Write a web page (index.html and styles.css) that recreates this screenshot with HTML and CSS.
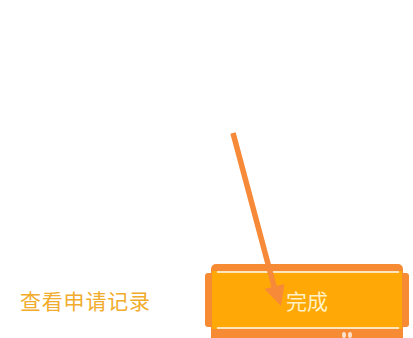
FILE: index.html
```html
<!DOCTYPE html>
<html lang="zh">
<head>
<meta charset="utf-8">
<link rel="stylesheet" href="styles.css">
</head>
<body>
<div class="page">
  <div class="spacer"></div>
  <div class="actions">
    <a class="link">查看申请记录</a>
    <div class="btn-wrap">
      <span class="bulge bulge-left"></span>
      <div class="frame">
        <div class="btn">完成</div>
        <span class="dots"><i></i><i></i></span>
      </div>
      <span class="bulge bulge-right"></span>
    </div>
  </div>
  <svg class="arrow" width="413" height="338" viewBox="0 0 413 338">
    <line x1="233" y1="133" x2="275" y2="290" stroke="#F78A38" stroke-width="5.5"/>
    <polygon points="281,306 264.5,289 284.5,284" fill="#F78A38"/>
  </svg>
</div>
</body>
</html>
```
FILE: styles.css
```css
html, body {
  margin: 0;
  padding: 0;
  background: #ffffff;
}
body {
  width: 413px;
  height: 338px;
  overflow: hidden;
  font-family: "Noto Sans CJK SC", "Noto Sans", sans-serif;
}
.page {
  position: relative;
  width: 413px;
  height: 338px;
  display: flex;
  flex-direction: column;
}
.spacer {
  height: 264px;
  flex: none;
}
.actions {
  display: flex;
  align-items: flex-start;
}
.link {
  margin-left: 20px;
  margin-top: 24px;
  font-size: 21px;
  line-height: 24px;
  color: #F1AC2C;
  letter-spacing: 0.8px;
}
.btn-wrap {
  margin-left: auto;
  margin-right: 4px;
  display: flex;
  align-items: flex-start;
}
.bulge {
  width: 6px;
  height: 54px;
  margin-top: 9px;
  background: #F78B34;
}
.bulge-left {
  border-radius: 3px 0 0 3px;
}
.bulge-right {
  border-radius: 0 3px 3px 0;
}
.frame {
  position: relative;
  width: 192px;
  height: 80px;
  box-sizing: border-box;
  padding: 7px 1px 0;
  background: #F78B34;
  border-radius: 5px 5px 0 0;
}
.btn {
  height: 58px;
  display: flex;
  align-items: center;
  justify-content: center;
  font-size: 21px;
  color: #FFF1C4;
  background:
    linear-gradient(#FCE6BE, #FCE6BE) left 5px top 0 / calc(100% - 8px) 2px no-repeat,
    linear-gradient(#FCE6BE, #FCE6BE) left 5px bottom 0 / calc(100% - 8px) 2px no-repeat,
    #FFA806;
}
.dots {
  position: absolute;
  left: 131px;
  top: 68px;
  display: flex;
  gap: 2px;
}
.dots i {
  display: block;
  width: 4px;
  height: 6px;
  border-radius: 50%;
  background: #FBE2CC;
}
.arrow {
  position: absolute;
  left: 0;
  top: 0;
  pointer-events: none;
}
```
